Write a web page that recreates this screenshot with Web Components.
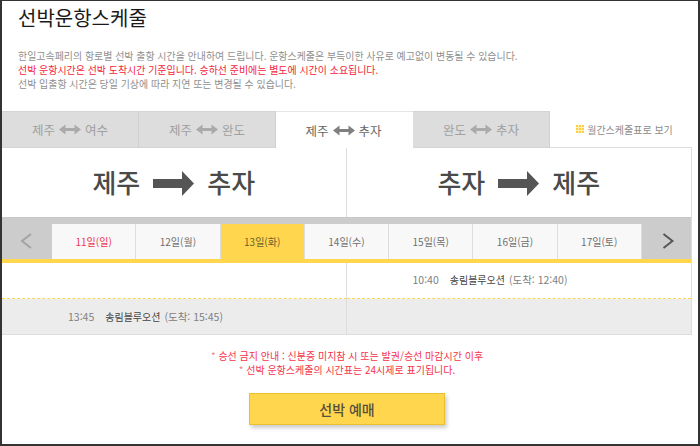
<!DOCTYPE html>
<html lang="ko">
<head>
<meta charset="utf-8">
<title>선박운항스케줄</title>
<style>
	html, body { margin: 0; padding: 0; background: #fff; }
	body { font-family: "Noto Sans CJK KR", "Noto Sans", sans-serif; }
</style>
</head>
<body>
<schedule-page>
	<page-intro slot="intro" heading="선박운항스케줄">
		<p>한일고속페리의 항로별 선박 출항 시간을 안내하여 드립니다. 운항스케줄은 부득이한 사유로 예고없이 변동될 수 있습니다.</p>
		<p class="red">선박 운항시간은 선박 도착시간 기준입니다. 승하선 준비에는 별도에 시간이 소요됩니다.</p>
		<p>선박 입출항 시간은 당일 기상에 따라 지연 또는 변경될 수 있습니다.</p>
	</page-intro>
	<route-tabs slot="tabs">
		<route-tab from="제주" to="여수"></route-tab>
		<route-tab from="제주" to="완도"></route-tab>
		<route-tab from="제주" to="추자" active></route-tab>
		<route-tab from="완도" to="추자"></route-tab>
		<month-link>월간스케줄표로 보기</month-link>
	</route-tabs>
	<schedule-board slot="board">
		<route-title slot="titles" from="제주" to="추자"></route-title>
		<route-title slot="titles" from="추자" to="제주"></route-title>
		<date-strip slot="dates">
			<date-cell class="sun">11일(일)</date-cell>
			<date-cell>12일(월)</date-cell>
			<date-cell active>13일(화)</date-cell>
			<date-cell>14일(수)</date-cell>
			<date-cell>15일(목)</date-cell>
			<date-cell>16일(금)</date-cell>
			<date-cell>17일(토)</date-cell>
		</date-strip>
		<sail-row slot="rows" left></sail-row>
		<sail-row slot="rows" depart="10:40" ship="송림블루오션" arrive="12:40"></sail-row>
		<sail-row slot="rows" left grey depart="13:45" ship="송림블루오션" arrive="15:45"></sail-row>
		<sail-row slot="rows" grey></sail-row>
	</schedule-board>
	<page-notes slot="notes">
		<div>승선 금지 안내 : 신분증 미지참 시 또는 발권/승선 마감시간 이후</div>
		<div>선박 운항스케줄의 시간표는 24시제로 표기됩니다.</div>
	</page-notes>
	<book-button slot="button">선박 예매</book-button>
</schedule-page>

<script>
(function() {
	function define(name, css, html) {
		class Comp extends HTMLElement {
			constructor() {
				super();
				this.attachShadow({mode: "open"});
			}
			connectedCallback() {
				let markup = typeof html === "function" ? html(this) : html;
				this.shadowRoot.innerHTML = "<style>" + css + "</style>" + markup;
			}
		}
		customElements.define(name, Comp);
	}

	const DOUBLE_ARROW = `<svg width="22" height="11" viewBox="0 0 22 11"><path d="M0 5.5 L6.5 0.5 V4 H15.5 V0.5 L22 5.5 L15.5 10.5 V7 H6.5 V10.5 Z" fill="currentColor"/></svg>`;
	const BIG_ARROW = `<svg width="41" height="25" viewBox="0 0 41 25"><path d="M0 8 H29 V0 L41 12.5 L29 25 V17 H0 Z" fill="#555"/></svg>`;

	define("schedule-page", `
		:host {
			display: block;
			box-sizing: border-box;
			width: 700px;
			height: 446px;
			border: solid #333;
			border-width: 1px 2px 2px 2px;
			overflow: hidden;
			background: #fff;
		}
		.wrap { width: 690px; }
		.button { display: flex; justify-content: center; margin-top: 16px; }
	`, `
		<div class="wrap">
			<slot name="intro"></slot>
			<slot name="tabs"></slot>
			<slot name="board"></slot>
			<slot name="notes"></slot>
			<div class="button"><slot name="button"></slot></div>
		</div>
	`);

	define("page-intro", `
		:host { display: block; height: 110px; padding-left: 16px; box-sizing: border-box; }
		h1 { margin: 0; padding-top: 2px; font-size: 20px; line-height: 30px; font-weight: 400; color: #1a1a1a; }
		.text { margin-top: 16px; font-size: 9.96px; line-height: 14px; color: #8f8f8f; }
		::slotted(p) { margin: 0; }
		::slotted(p.red) { color: #f5243a; }
	`, el => `<h1>${el.getAttribute("heading")}</h1><div class="text"><slot></slot></div>`);

	define("route-tabs", `
		:host { display: flex; height: 37px; }
	`, `<slot></slot>`);

	define("route-tab", `
		:host {
			display: flex;
			align-items: center;
			justify-content: center;
			gap: 4px;
			box-sizing: border-box;
			width: 137px;
			height: 37px;
			font-size: 12.5px;
			color: #a0a0a0;
			background: #ddd;
			border-top: 1px solid #d4d4d4;
			border-right: 1px solid #d0d0d0;
			border-bottom: 1px solid #d4d4d4;
		}
		:host([active]) { background: #fff; color: #666; border-color: #e6e6e6; border-right: 0; border-bottom: 0; padding-right: 2px; }
		svg { display: block; color: #aaa; }
		:host([active]) svg { color: #808080; }
	`, el => `<span>${el.getAttribute("from")}</span>${DOUBLE_ARROW}<span>${el.getAttribute("to")}</span>`);

	define("month-link", `
		:host {
			display: flex;
			align-items: center;
			justify-content: center;
			gap: 3px;
			flex: 1;
			box-sizing: border-box;
			padding: 0 0 0 7px;
			height: 37px;
			font-size: 10px;
			color: #8c8c8c;
			border-bottom: 1px solid #ddd;
		}
		.dots {
			width: 8px;
			height: 8px;
			background:
				repeating-linear-gradient(90deg, transparent 0 2px, #fff0b8 2px 3px),
				repeating-linear-gradient(0deg, transparent 0 2px, #fff0b8 2px 3px),
				#ffcf3f;
		}
	`, `<span class="dots"></span><span><slot></slot></span>`);

	define("schedule-board", `
		:host { display: block; box-sizing: border-box; border-right: 1px solid #ddd; border-bottom: 1px solid #ddd; }
		.titles, .rows { display: grid; grid-template-columns: 1fr 1fr; }
		.titles { height: 69px; }
	`, `
		<div class="titles"><slot name="titles"></slot></div>
		<slot name="dates"></slot>
		<div class="rows"><slot name="rows"></slot></div>
	`);

	define("route-title", `
		:host {
			display: flex;
			align-items: center;
			justify-content: center;
			gap: 13px;
			font-size: 26px;
			font-weight: 500;
			color: #4a4a4a;
			padding-bottom: 2px;
		}
		:host(:first-of-type) { border-right: 1px solid #ddd; }
		svg { display: block; margin-top: 3px; }
	`, el => `<span>${el.getAttribute("from")}</span>${BIG_ARROW}<span>${el.getAttribute("to")}</span>`);

	define("date-strip", `
		:host {
			display: grid;
			grid-template-columns: 50px repeat(7, 84.28px) 1fr;
			box-sizing: border-box;
			height: 46px;
			padding-top: 6px;
			background: #ccc;
			border-top: 1px solid #c8c8c8;
			border-bottom: 4px solid #ffd64d;
		}
		.nav { display: flex; align-items: center; justify-content: center; padding-bottom: 1px; }
		.prev { padding-right: 2px; }
		.next { padding-left: 3px; }
		svg { display: block; }
	`, `
		<div class="nav prev"><svg width="12" height="16" viewBox="0 0 12 16"><path d="M11 1 L2 8 L11 15" fill="none" stroke="#a3a3a3" stroke-width="2"/></svg></div>
		<slot></slot>
		<div class="nav next"><svg width="12" height="16" viewBox="0 0 12 16"><path d="M1.5 1 L10.5 8 L1.5 15" fill="none" stroke="#555" stroke-width="2"/></svg></div>
	`);

	define("date-cell", `
		:host {
			display: flex;
			align-items: center;
			justify-content: center;
			box-sizing: border-box;
			height: 35px;
			font-size: 10px;
			color: #6e6e6e;
			background: #f8f8f8;
			border-right: 1px solid #ddd;
		}
		:host([active]) { background: #ffd64d; color: #6b6030; }
		:host(.sun) { color: #f0314f; }
	`, `<slot></slot>`);

	define("sail-row", `
		:host {
			display: flex;
			align-items: center;
			box-sizing: border-box;
			height: 36px;
			padding: 0 0 3px 66px;
			font-size: 10.5px;
			color: #808080;
			border-bottom: 1px dashed #ffd64d;
		}
		:host([grey]) { background: #ececec; height: 35px; padding-bottom: 0; border-bottom: 0; }
		:host([left]) { border-right: 1px solid #ddd; }
		b { font-size: 10px; font-weight: 400; color: #444; margin-left: 11px; }
		i { font-style: normal; margin-left: 4px; }
	`, el => el.getAttribute("depart")
		? `<span>${el.getAttribute("depart")}</span><b>${el.getAttribute("ship")}</b><i>(도착: ${el.getAttribute("arrive")})</i>`
		: ``);

	define("page-notes", `
		:host { display: block; margin-top: 14px; text-align: center; font-size: 10px; line-height: 14px; color: #f5334a; }
		::slotted(div)::before { content: "* "; color: #f0828f; }
	`, `<slot></slot>`);

	define("book-button", `
		:host {
			display: flex;
			align-items: center;
			justify-content: center;
			box-sizing: border-box;
			width: 196px;
			height: 32px;
			font-size: 14px;
			font-weight: 500;
			color: #55513d;
			background: #ffd64d;
			border: 1px solid #e9c02f;
			box-shadow: 2px 3px 4px rgba(0,0,0,.2);
		}
	`, `<slot></slot>`);
})();
</script>
</body>
</html>
